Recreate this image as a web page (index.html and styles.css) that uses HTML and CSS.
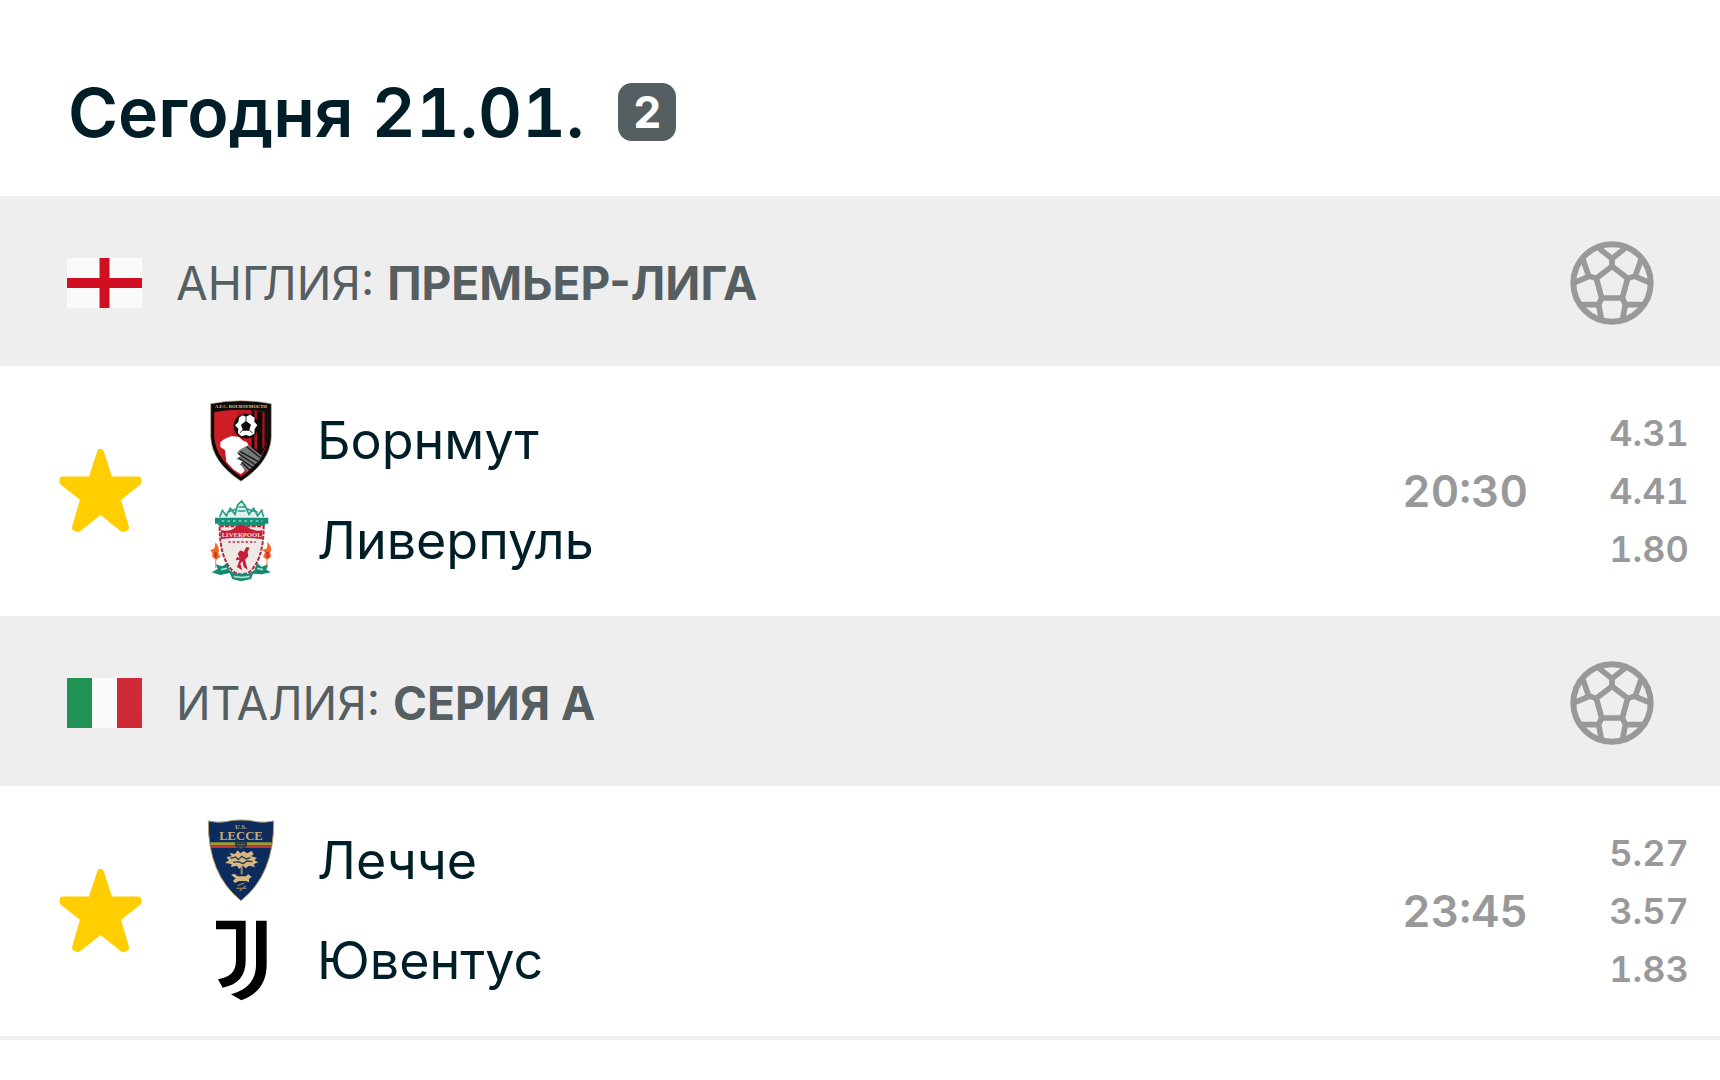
FILE: index.html
```
<!DOCTYPE html>
<html lang="ru">

<head>
    <meta charset="UTF-8">
    <meta name="viewport" content="width=device-width, initial-scale=1">
    <title>Сегодня 21.01.</title>
    <link rel="stylesheet" href="styles.css">
</head>

<body>
    <svg class="sprite" aria-hidden="true">
        <symbol id="ball" viewBox="61 62 252 252">
            <g fill="none" stroke="#999" stroke-width="17">
                <circle cx="187" cy="188" r="116" stroke-width="18" />
                <path d="M187 138L234 174L218 233H156L140 174Z" />
                <path d="M187 138V110M187 115L146 82M187 115L228 82" />
                <path d="M140 174L114 166M118 170L98 112M118 168L72 188" />
                <path d="M234 174L260 166M256 170L276 112M256 168L302 188" />
                <path d="M156 233L146 255M146 253H88M146 249L156 300" />
                <path d="M218 233L228 255M228 253H286M228 249L218 300" />
            </g>
        </symbol>
        <symbol id="star" viewBox="0 0 84 84">
            <path d="M42.500 3.500L51.500 31H80V33L59 49.500L67.500 78.500L65 79.500L42.500 61.500L20 79.500L17.500 78.500L26 49.500L5 33V31H33.500Z" fill="#ffcd00" stroke="#ffcd00" stroke-width="7" stroke-linejoin="round" />
        </symbol>
    </svg>

    <header class="header">
        <h1>Сегодня 21.01.</h1>
        <span class="badge">2</span>
    </header>

    <main>
        <section>
            <div class="league">
                <svg class="flag" viewBox="0 0 75 50">
                    <rect width="75" height="50" fill="#fafafa" />
                    <path d="M0 25H75M37.500 0V50" stroke="#d01022" stroke-width="10" />
                </svg>
                <h2>АНГЛИЯ: <a href="#">ПРЕМЬЕР-ЛИГА</a></h2>
                <svg class="ball"><use href="#ball" /></svg>
            </div>
            <div class="match">
                <button class="favorite" type="button" aria-label="Избранное">
                    <svg><use href="#star" /></svg>
                </button>
                <div class="teams">
                    <div class="team">
                        <svg class="crest" viewBox="28 26 252 252">
                            <path d="M63 40Q154 22 245 40V140Q242 215 154 273Q66 215 63 140Z" fill="#0d0a0a" stroke="#c8b898" stroke-width="2" />
                            <path d="M74 66Q110 58 154 58Q198 58 234 66V140Q230 206 154 260Q78 206 74 140Z" fill="#c4161f" />
                            <path d="M186 60L234 66V140Q231 170 210 201L186 184Z" fill="#0d0a0a" />
                            <path d="M194 62H202V180L194 174ZM218 66H225V165L218 178Z" fill="#a8141b" />
                            <path d="M74 66V140Q77 180 104 212L92 160L126 138L136 90L145 60Q105 59 74 66Z" fill="#d2222a" opacity=".7" />
                            <path d="M92 156L104 146L126 137L148 140L158 150L172 156L180 172L178 198L172 214L160 228L165 242L154 252L132 238L110 214L106 180L92 170Z" fill="#fff" />
                            <path d="M150 178L176 164L216 196L208 212L172 244L150 222L160 214L140 205L154 196L142 188Z" fill="#77797b" />
                            <path d="M152 184L206 214M146 190L198 224M148 203L190 232M156 216L180 240M172 170L212 202" stroke="#191919" stroke-width="4" />
                            <circle cx="169" cy="107" r="37" fill="#0d0a0a" />
                            <path d="M148 82L158 75L169 79L181 73L195 82L194 94L203 105L195 116L194 130L180 138L169 134L155 138L145 129L146 115L136 105L146 95Z" fill="#fff" />
                            <path d="M169 92L184 103L178 121H160L154 103Z" fill="#0d0a0a" />
                            <path d="M169 78V95M150 128L161 118M189 128L178 118" stroke="#333" stroke-width="3" />
                            <text x="154" y="54" class="crest-text" font-size="14" fill="#d8c8a4">A.F.C. BOURNEMOUTH</text>
                        </svg>
                        <span>Борнмут</span>
                    </div>
                    <div class="team">
                        <svg class="crest" viewBox="28 326 252 252">
                            <path d="M100 382Q90 374 98 364L112 370Q116 352 136 352Q140 340 156 336Q172 340 176 352Q196 352 200 370L214 362Q224 374 212 382Z" fill="#e2f2ee" />
                            <path d="M90 380L98 360L110 376L122 354L136 372L144 344L156 332L166 346L178 372L192 354L204 376L216 360L222 380M112 366L140 356M172 356L204 366M146 350H166M144 362H168" fill="none" stroke="#2a9c85" stroke-width="5" />
                            <path d="M76 382H236V400H226V406H86V400H76Z" fill="#159078" />
                            <path d="M96 392H218" stroke="#8fd0c2" stroke-width="5" stroke-dasharray="8 9" />
                            <path d="M90 408H222Q222 510 178 546L156 554L134 546Q90 510 90 408Z" fill="#eee8e6" stroke="#b5283a" stroke-width="6" stroke-dasharray="12 4" />
                            <path d="M94 420Q126 424 138 410L156 402L174 410Q188 424 218 420V446Q156 438 94 446Z" fill="#c41f36" />
                            <text x="156" y="441" class="crest-text" font-size="20" fill="#f6dcdc">LIVERPOOL</text>
                            <path d="M116 455H198" stroke="#c41f36" stroke-width="4" stroke-dasharray="7 6" />
                            <path d="M170 470L180 472L174 484L176 498L166 508L174 538L162 530L158 512L152 520L158 540L142 530L150 508L138 510L142 500L150 502L144 490L152 480L162 484Z" fill="#c41f36" />
                            <path d="M78 456Q92 476 86 488L92 500L80 508L68 500V488L62 480L74 474ZM234 454Q250 474 242 486L244 500L232 508L220 500L226 486L218 480L232 474Z" fill="#f06a28" />
                            <path d="M78 484V502M234 484V502" stroke="#c92e25" stroke-width="7" />
                            <path d="M78 506V534M232 506V534" stroke="#fa9b5a" stroke-width="4" />
                            <path d="M66 546L84 536L78 522L98 528L112 518L120 540L138 550H176L194 540L202 518L216 530L234 522L230 538L244 546L216 552L190 550L184 566L154 573L128 566L120 548L92 554Z" fill="#168970" />
                            <path d="M132 558Q156 564 180 558M94 538L112 534M202 534L220 538" fill="none" stroke="#a8dace" stroke-width="5" />
                        </svg>
                        <span>Ливерпуль</span>
                    </div>
                </div>
                <time class="time">20:30</time>
                <div class="odds">
                    <span>4.31</span>
                    <span>4.41</span>
                    <span>1.80</span>
                </div>
            </div>
        </section>

        <section>
            <div class="league">
                <svg class="flag" viewBox="0 0 75 50">
                    <rect width="25" height="50" fill="#1f9254" />
                    <rect x="25" width="25" height="50" fill="#fafafa" />
                    <rect x="50" width="25" height="50" fill="#cf2a38" />
                </svg>
                <h2>ИТАЛИЯ: <a href="#">СЕРИЯ А</a></h2>
                <svg class="ball"><use href="#ball" /></svg>
            </div>
            <div class="match">
                <button class="favorite" type="button" aria-label="Избранное">
                    <svg><use href="#star" /></svg>
                </button>
                <div class="teams">
                    <div class="team">
                        <svg class="crest" viewBox="28 26 252 252">
                            <path d="M56 32Q84 38 108 34Q132 28 154 29Q176 28 200 34Q224 38 252 32Q254 192 154 271Q54 192 56 32Z" fill="#0b2c5d" stroke="#b49a68" stroke-width="3" />
                            <path d="M62 96H246V104H62Z" fill="#9c9b2f" />
                            <path d="M63 104H245L244 113H64Z" fill="#bd3440" />
                            <path d="M136 96H172V106L154 120L136 106Z" fill="#253a52" />
                            <path d="M142 103H166M148 110H160" stroke="#6e6b50" stroke-width="3" />
                            <text x="154" y="56" class="crest-text" font-size="20" fill="#c9ac76">U.S.</text>
                            <text x="154" y="89" class="crest-text" font-size="38" fill="#c9ac76">LECCE</text>
                            <path d="M106 158L118 150L110 140L126 138L120 128L136 131L144 120L152 129L162 122L172 129L186 122L192 132L184 138L202 142L194 150L206 156L192 161L196 170L178 166L168 174L160 166L148 176L142 166L124 170L126 161Z" fill="#d8b780" />
                            <path d="M122 144L138 140L146 148L156 138L170 146L182 142M130 156L146 154L160 160L172 152L188 154" fill="none" stroke="#233b5c" stroke-width="4" />
                            <path d="M156 170V192" stroke="#9d8861" stroke-width="6" />
                            <path d="M124 194L134 190L144 198H168L176 192L186 200L178 206V216L168 212H148L136 218L130 212L138 204Z" fill="#d8b780" />
                            <path d="M144 226L164 218M140 234H170M150 242L168 226" stroke="#8b7e60" stroke-width="4" />
                        </svg>
                        <span>Лечче</span>
                    </div>
                    <div class="team">
                        <svg class="crest" viewBox="28 326 252 252">
                            <path d="M79 331H168V450C168 498 144 524 99 532L85 507C122 500 139 484 139 450V357H79Z" />
                            <path d="M199 331H231V462C231 518 205 552 155 570L124 552C176 538 199 508 199 462Z" />
                        </svg>
                        <span>Ювентус</span>
                    </div>
                </div>
                <time class="time">23:45</time>
                <div class="odds">
                    <span>5.27</span>
                    <span>3.57</span>
                    <span>1.83</span>
                </div>
            </div>
        </section>
    </main>
</body>

</html>
```
FILE: styles.css
```
body {
    font-family: Inter, Roboto, sans-serif;
    background: #fff;
    color: #001e28;
    margin: 0;
}

.sprite {
    display: none;
}

.header {
    display: flex;
    align-items: center;
    gap: 34px;
    padding: 68px 68px 40px;
}

h1 {
    margin: 0;
    font-size: 68px;
    line-height: 88px;
    font-weight: 600;
    font-variant-numeric: tabular-nums;
}

.badge {
    width: 58px;
    border-radius: 14px;
    background: #555e61;
    color: #fff;
    font-size: 44px;
    line-height: 58px;
    font-weight: 700;
    text-align: center;
}

.league {
    display: flex;
    align-items: center;
    padding: 45px 66px 41px 67px;
    background: #eee;
    color: #555e61;
}

.flag {
    width: 75px;
    height: 50px;
    margin-right: 34px;
}

h2 {
    flex: 1;
    margin: 0;
    font-size: 46px;
    line-height: 56px;
    font-weight: 400;
}

h2 a {
    color: inherit;
    font-weight: 700;
    text-decoration: none;
}

.ball {
    width: 84px;
    height: 84px;
}

.match {
    display: flex;
    align-items: center;
    padding: 33px 20px 33px 58px;
}

section:last-child .match {
    border-bottom: 4px solid #eee;
}

.favorite {
    padding: 0;
    border: none;
    background: none;
    cursor: pointer;
}

.favorite svg {
    display: block;
    width: 84px;
    height: 84px;
}

.teams {
    flex: 1;
    display: flex;
    flex-direction: column;
    gap: 16px;
    margin-left: 57px;
}

.team {
    display: flex;
    align-items: center;
    gap: 34px;
    font-size: 52px;
    line-height: 84px;
}

.crest {
    width: 84px;
    height: 84px;
}

.crest-text {
    font-family: "Liberation Serif", serif;
    font-weight: 700;
    text-anchor: middle;
}

.time,
.odds {
    color: #999;
    font-weight: 600;
    font-variant-numeric: tabular-nums;
}

.time {
    font-size: 44px;
}

.odds {
    display: flex;
    flex-direction: column;
    width: 102px;
    margin-left: 70px;
    font-size: 36px;
    line-height: 58px;
    text-align: center;
}
```
